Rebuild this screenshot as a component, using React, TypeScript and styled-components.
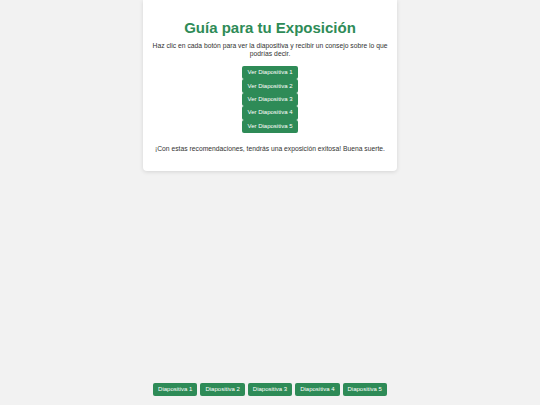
import React, { useState } from "react";
import styled, { createGlobalStyle } from "styled-components";

const GlobalStyle = createGlobalStyle`
  html, body {
    margin: 0;
    padding: 0;
    background: #f2f2f2;
    font-family: "Liberation Sans", Arial, sans-serif;
    color: #333;
  }
`;

const Page = styled.div`
  min-height: 100vh;
  display: flex;
  flex-direction: column;
  align-items: center;
  box-sizing: border-box;
  padding-bottom: 9px;
`;

const Card = styled.div`
  width: 254px;
  box-sizing: border-box;
  background: #fff;
  border-radius: 0 0 4px 4px;
  box-shadow: 0 1px 4px rgba(0, 0, 0, 0.12);
  padding: 19px 8px 18px;
  text-align: center;
`;

const Title = styled.h1`
  margin: 0 0 6px;
  font-size: 15px;
  line-height: 17px;
  font-weight: bold;
  color: #2e8b57;
`;

const Intro = styled.p`
  margin: 0 0 8px;
  font-size: 6.75px;
  line-height: 8px;
`;

const SlideList = styled.div`
  display: flex;
  flex-direction: column;
  align-items: center;
`;

const SlideButton = styled.button`
  background: #2e8b57;
  color: #fff;
  border: none;
  border-radius: 2px;
  font-family: "Liberation Sans", Arial, sans-serif;
  font-weight: normal;
  font-size: 6px;
  line-height: 7px;
  padding: 3.2px 5px;
  cursor: pointer;
`;

const Tip = styled.p`
  margin: 6px 0 0;
  font-size: 6.75px;
  line-height: 8px;
  color: #444;
`;

const Closing = styled.p`
  margin: 12px 0 0;
  font-size: 6.75px;
  line-height: 8px;
`;

const Nav = styled.nav`
  margin-top: auto;
  display: flex;
  gap: 3px;
`;

const NavButton = styled.button<{ $active?: boolean }>`
  background: ${(p) => (p.$active ? "#246d44" : "#2e8b57")};
  color: #fff;
  border: none;
  border-radius: 2px;
  font-family: "Liberation Sans", Arial, sans-serif;
  font-weight: normal;
  font-size: 6px;
  line-height: 7px;
  padding: 3px 5px;
  cursor: pointer;
`;

const tips = [
  "Presenta el tema y explica por qué es importante.",
  "Muestra los puntos principales con ejemplos sencillos.",
  "Comparte datos o imágenes que apoyen tu idea.",
  "Resume lo más importante antes de terminar.",
  "Agradece al público y abre espacio para preguntas.",
];

export default function App() {
  const [slide, setSlide] = useState<number | null>(null);

  return (
    <Page>
      <GlobalStyle />
      <Card>
        <Title>Guía para tu Exposición</Title>
        <Intro>
          Haz clic en cada botón para ver la diapositiva y recibir un consejo
          sobre lo que podrías decir.
        </Intro>
        <SlideList>
          {tips.map((_, i) => (
            <SlideButton key={i} onClick={() => setSlide(i)}>
              Ver Diapositiva {i + 1}
            </SlideButton>
          ))}
        </SlideList>
        {slide !== null && <Tip>{tips[slide]}</Tip>}
        <Closing>
          ¡Con estas recomendaciones, tendrás una exposición exitosa! Buena
          suerte.
        </Closing>
      </Card>
      <Nav>
        {tips.map((_, i) => (
          <NavButton key={i} $active={slide === i} onClick={() => setSlide(i)}>
            Diapositiva {i + 1}
          </NavButton>
        ))}
      </Nav>
    </Page>
  );
}
